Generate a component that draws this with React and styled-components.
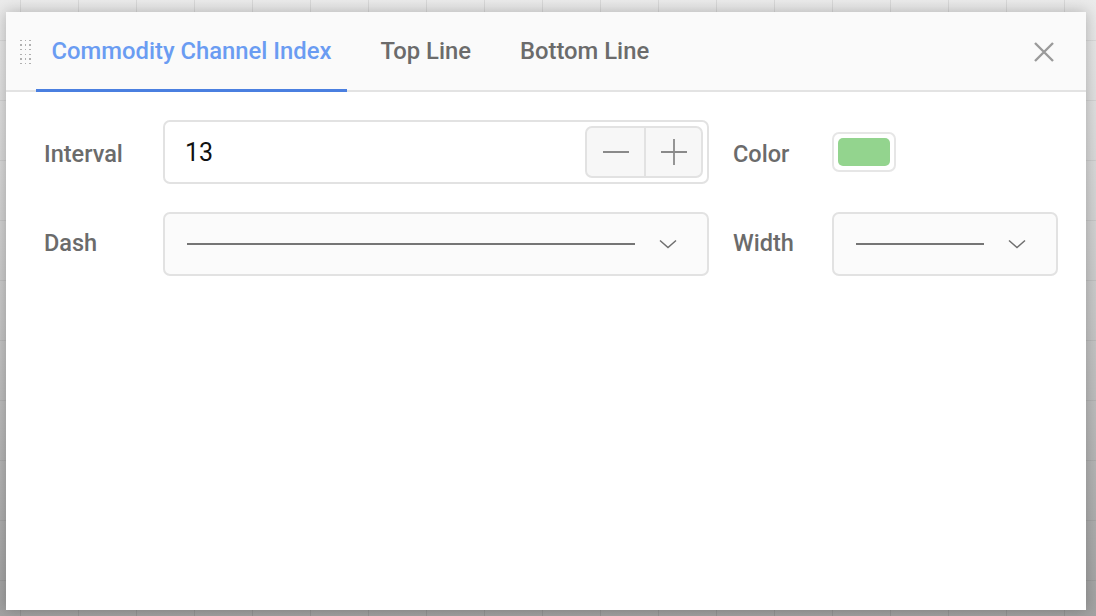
import React from "react";
import styled, { createGlobalStyle } from "styled-components";

const Global = createGlobalStyle`
  html, body { margin: 0; padding: 0; }
  body { font-family: Roboto, "Noto Sans", "Liberation Sans", sans-serif; }
  * { box-sizing: border-box; }
`;

const Page = styled.div`
  width: 1096px;
  height: 616px;
  padding: 12px 10px 6px 6px;
  display: flex;
  background-color: #c8c8c8;
  background-image:
    repeating-linear-gradient(90deg, transparent 0 20px, rgba(0,0,0,0.08) 20px 21px, transparent 21px 58px),
    repeating-linear-gradient(180deg, transparent 0 40px, rgba(0,0,0,0.06) 40px 41px, transparent 41px 60px),
    linear-gradient(180deg, #ebebeb 0%, #c9c9c9 50%, #a2a2a2 100%);
  overflow: hidden;
`;

const Dialog = styled.div`
  flex: 1;
  display: flex;
  flex-direction: column;
  background: #ffffff;
  box-shadow: 0 0 14px rgba(0, 0, 0, 0.25);
`;

const Header = styled.div`
  height: 80px;
  display: flex;
  align-items: stretch;
  background: #fafafa;
  border-bottom: 2px solid #e3e3e3;
  padding: 0 28px 0 14px;
`;

const Handle = styled.div`
  display: grid;
  grid-template-columns: repeat(3, 1.5px);
  grid-auto-rows: 1.5px;
  column-gap: 3px;
  row-gap: 3.2px;
  align-self: center;
  margin-top: 2px;
  margin-right: 5px;
  span { background: #b0b0b0; }
`;

const Tabs = styled.div`
  display: flex;
  align-items: stretch;
  flex: 1;
  gap: 17px;
`;

const Tab = styled.div`
  display: flex;
  align-items: center;
  padding: 1px 16px 0;
  font-size: 23.8px;
  font-weight: 500;
  color: ${(p) => (p.$active ? "#6a9cf2" : "#6b6b6b")};
  margin-bottom: -2px;
  border-bottom: 3px solid ${(p) => (p.$active ? "#4a7fe0" : "transparent")};
`;

const Close = styled.button`
  border: none;
  background: none;
  padding: 0;
  width: 28px;
  height: 28px;
  align-self: center;
  margin-top: 2px;
  display: flex;
  align-items: center;
  justify-content: center;
  cursor: pointer;
`;

const Body = styled.div`
  display: grid;
  grid-template-columns: 119px 546px 123px 226px;
  row-gap: 28px;
  padding: 28px 28px 0 38px;
  align-items: center;
`;

const Label = styled.div`
  font-size: 23.5px;
  font-weight: 500;
  color: #6b6b6b;
  padding-left: ${(p) => (p.$indent ? "24px" : "0")};
  margin-top: ${(p) => p.$dy || 0}px;
`;

const Field = styled.div`
  height: 64px;
  border: 2px solid #e2e2e2;
  border-radius: 7px;
  display: flex;
  align-items: center;
  background: ${(p) => (p.$muted ? "#fbfbfb" : "#ffffff")};
  padding: ${(p) => p.$pad || "0 4px 0 20px"};
`;

const Value = styled.div`
  flex: 1;
  font-size: 25px;
  color: #111;
`;

const Stepper = styled.div`
  display: flex;
  height: 52px;
  border: 2px solid #e2e2e2;
  border-radius: 7px;
  background: #f7f7f7;
  overflow: hidden;
`;

const StepBtn = styled.div`
  width: 57px;
  display: flex;
  align-items: center;
  justify-content: center;
  & + & { border-left: 2px solid #e2e2e2; }
`;

const SwatchWrap = styled.div`
  width: 64px;
  height: 40px;
  border: 2px solid #e6e6e6;
  border-radius: 7px;
  padding: 4px;
  justify-self: start;
`;

const Swatch = styled.div`
  width: 100%;
  height: 100%;
  border-radius: 5px;
  background: ${(p) => p.$color};
`;

const LinePreview = styled.div`
  width: ${(p) => p.$w}px;
  height: 2px;
  background: #757575;
  margin-right: auto;
`;

const Chevron = () => (
  <svg width="18" height="10" viewBox="0 0 18 10" fill="none">
    <path d="M1 1.5 L9 8.5 L17 1.5" stroke="#6f6f6f" strokeWidth="1.5" />
  </svg>
);

export default function App() {
  return (
    <Page>
      <Global />
      <Dialog>
        <Header>
          <Handle>
            {Array.from({ length: 18 }).map((_, i) => (
              <span key={i} />
            ))}
          </Handle>
          <Tabs>
            <Tab $active>Commodity Channel Index</Tab>
            <Tab>Top Line</Tab>
            <Tab>Bottom Line</Tab>
          </Tabs>
          <Close aria-label="Close">
            <svg width="22" height="22" viewBox="0 0 22 22">
              <path d="M2 2 L20 20 M20 2 L2 20" stroke="#9a9a9a" strokeWidth="2.4" />
            </svg>
          </Close>
        </Header>
        <Body>
          <Label $dy={3}>Interval</Label>
          <Field>
            <Value>13</Value>
            <Stepper>
              <StepBtn>
                <svg width="28" height="28" viewBox="0 0 28 28">
                  <path d="M1 14 H27" stroke="#8a8a8a" strokeWidth="1.8" />
                </svg>
              </StepBtn>
              <StepBtn>
                <svg width="28" height="28" viewBox="0 0 28 28">
                  <path d="M1 14 H27 M14 1 V27" stroke="#8a8a8a" strokeWidth="1.8" />
                </svg>
              </StepBtn>
            </Stepper>
          </Field>
          <Label $indent $dy={3}>Color</Label>
          <SwatchWrap>
            <Swatch $color="#93d48e" />
          </SwatchWrap>

          <Label $dy={-3}>Dash</Label>
          <Field $muted $pad="0 30px 0 22px">
            <LinePreview $w={448} />
            <Chevron />
          </Field>
          <Label $indent $dy={-3}>Width</Label>
          <Field $muted $pad="0 30px 0 22px">
            <LinePreview $w={128} />
            <Chevron />
          </Field>
        </Body>
      </Dialog>
    </Page>
  );
}
